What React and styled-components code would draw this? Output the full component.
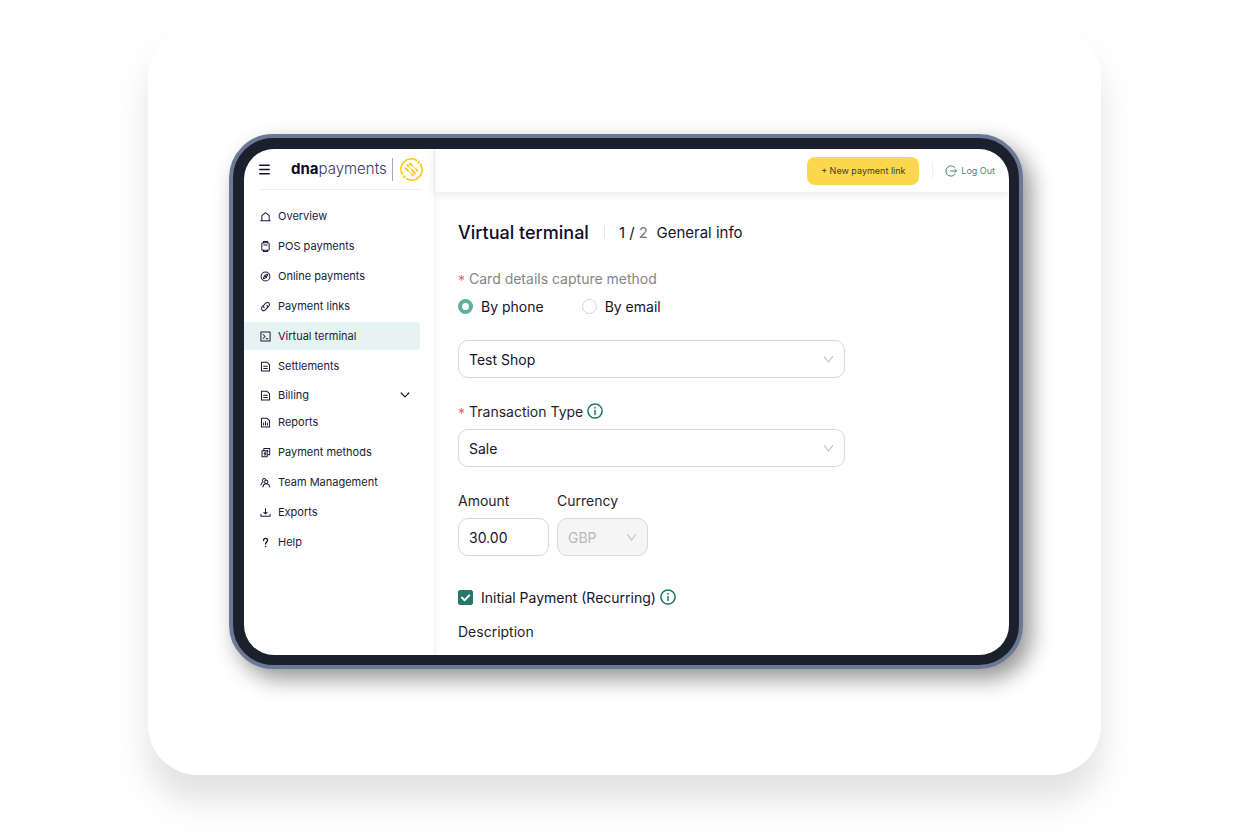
import React, { useState } from "react";
import styled, { createGlobalStyle } from "styled-components";

const GlobalStyle = createGlobalStyle`
  *, *::before, *::after {
    box-sizing: border-box;
  }
  body {
    margin: 0;
    background: #fefefe;
    color: #14142b;
    font-family: Inter, "Open Sans", sans-serif;
  }
  button, input, select {
    font-family: inherit;
    color: inherit;
  }
`;

// Styled components
const Page = styled.div`
  padding: 28px 149px 59px 148px;
`;

const Card = styled.div`
  padding: 106px 78px 106px 81px;
  border-radius: 50px;
  background: #fff;
  box-shadow: 0 26px 30px rgba(0, 0, 0, 0.11);
`;

const Device = styled.div`
  padding: 11px 10px 10px 11px;
  border: 4px solid #6c7896;
  border-radius: 44px;
  background: #1a202c;
  box-shadow: 8px 10px 22px rgba(0, 0, 0, 0.42);
`;

const Screen = styled.div`
  display: flex;
  border-radius: 30px;
  overflow: hidden;
  background: #fff;
`;

const Sidebar = styled.aside`
  flex: 0 0 191px;
  min-width: 0;
  border-right: 1px solid #f3f3f3;
  box-shadow: 1px 0 6px rgba(0, 0, 0, 0.04);
`;

const Brand = styled.div`
  display: flex;
  align-items: center;
  height: 41px;
  margin: 0 12px 0 15px;
  border-bottom: 1px solid #efefef;
`;

const MenuButton = styled.button`
  display: flex;
  padding: 0;
  margin-right: 21px;
  border: none;
  background: none;
  cursor: pointer;
`;

const Logo = styled.a`
  display: flex;
  align-items: center;
  gap: 5px;
  font-size: 15px;
  line-height: 24px;
  font-weight: 300;
  color: #3c3560;
  text-decoration: none;
  b {
    font-weight: 700;
    color: #0b0b26;
  }
`;

const LogoMark = styled.span`
  display: flex;
  padding-left: 7px;
  border-left: 1px solid #a9a9b5;
`;

const NavList = styled.ul`
  display: flex;
  flex-direction: column;
  gap: 2px;
  margin: 0;
  padding: 0 14px 0 0;
  list-style: none;
`;

const Nav = styled.nav`
  padding-top: 12px;
`;

const NavLink = styled.a`
  display: flex;
  align-items: center;
  gap: 7px;
  height: ${({ $group }) => ($group ? "26px" : "28px")};
  padding: 0 10px 0 16px;
  border-radius: 0 4px 4px 0;
  background: ${({ $active }) => ($active ? "#e7f3f2" : "transparent")};
  color: #1c1a3a;
  font-size: 11px;
  text-decoration: none;
`;

const NavText = styled.span`
  flex: 1;
`;

const Main = styled.main`
  flex: 1;
  min-width: 0;
`;

const TopBar = styled.header`
  display: flex;
  align-items: center;
  justify-content: flex-end;
  height: 43px;
  padding-right: 14px;
  box-shadow: 0 2px 10px rgba(0, 0, 0, 0.1);
`;

const PayButton = styled.button`
  height: 28px;
  padding: 0;
  width: 112px;
  border: none;
  border-radius: 8px;
  background: #fbd84b;
  color: #3b3a3c;
  font-size: 9px;
  cursor: pointer;
`;

const LogOut = styled.a`
  display: flex;
  align-items: center;
  gap: 4px;
  height: 18px;
  margin-left: 13px;
  padding-left: 12px;
  border-left: 1px solid #f0f0f0;
  color: #3c8a78;
  font-size: 9px;
  text-decoration: none;
`;

const Form = styled.form`
  padding: 28px 24px 12px 23px;
`;

const TitleRow = styled.div`
  display: flex;
  align-items: center;
  height: 24px;
  margin-bottom: 24px;
`;

const Title = styled.h1`
  margin: 0 15px 0 0;
  font-size: 18px;
  font-weight: 500;
  color: #0f0e2a;
`;

const Step = styled.div`
  display: flex;
  align-items: center;
  height: 12px;
  padding-left: 14px;
  border-left: 1px solid #e6e6e6;
  font-size: 15px;
  white-space: pre;
  span {
    color: #777;
  }
`;

const Field = styled.div`
  width: ${({ $width }) => $width || "387px"};
  max-width: 100%;
  margin-bottom: 23px;
`;

const FieldSet = styled.fieldset`
  margin: 0 0 24px;
  padding: 0;
  border: none;
`;

const FieldRow = styled.div`
  display: flex;
  gap: 8px;
  margin-bottom: 8px;
`;

const Label = styled.label`
  display: flex;
  align-items: center;
  gap: 4px;
  height: 20px;
  margin-bottom: 8px;
  padding: 0;
  font-size: 14px;
  color: ${({ $muted }) => ($muted ? "#858585" : "#1f1f25")};
`;

const Star = styled.span`
  width: 7px;
  padding-top: 4px;
  font-size: 14px;
  color: #f0605f;
`;

const RadioRow = styled.div`
  display: flex;
  gap: 38px;
`;

const Choice = styled.label`
  display: flex;
  align-items: center;
  gap: 8px;
  height: 20px;
  font-size: 14px;
`;

const Radio = styled.input`
  appearance: none;
  width: 15px;
  height: 15px;
  margin: 0;
  border: 1px solid #d4d4d4;
  border-radius: 50%;
  background: #fff;
  &:checked {
    border: 4px solid #5cb0a2;
  }
`;

const SelectBox = styled.div`
  position: relative;
  svg {
    position: absolute;
    right: 11px;
    top: 14px;
    pointer-events: none;
  }
`;

const Select = styled.select`
  appearance: none;
  display: block;
  width: 100%;
  height: 38px;
  padding: 0 10px;
  border: 1px solid #d9d9d9;
  border-radius: 10px;
  background: #fff;
  font-size: 14px;
  &:disabled {
    background: #f5f5f5;
    color: #b8b8b8;
    opacity: 1;
  }
`;

const Input = styled.input`
  display: block;
  width: 100%;
  height: 38px;
  padding: 0 10px;
  border: 1px solid #d9d9d9;
  border-radius: 10px;
  font-size: 14px;
`;

const CheckRow = styled.div`
  display: flex;
  align-items: center;
  gap: 4px;
  height: 20px;
  margin-bottom: 16px;
`;

const CheckBox = styled.span`
  position: relative;
  display: flex;
  svg {
    position: absolute;
    inset: 0;
    pointer-events: none;
  }
`;

const Check = styled.input`
  appearance: none;
  width: 15px;
  height: 15px;
  margin: 0;
  border: 1px solid #26786a;
  border-radius: 2px;
  &:checked {
    background: #26786a;
  }
`;

const SectionText = styled.div`
  height: 20px;
  font-size: 14px;
  color: #1f1f25;
`;

// Icons
const Icon = ({ size = 11, children, stroke = "currentColor", width = 1.1, box = 12 }) => (
  <svg
    width={size}
    height={size}
    viewBox={`0 0 ${box} ${box}`}
    fill="none"
    stroke={stroke}
    strokeWidth={width}
    strokeLinecap="round"
    strokeLinejoin="round"
    aria-hidden="true"
  >
    {children}
  </svg>
);

const page = <path d="M1.6 1.4h6L10.4 4v6.8H1.6z" />;

const icons = {
  overview: <path d="M.8 10.6h10.4M2 10.4V5L6 1.8 10 5v5.4" />,
  pos: (
    <>
      <rect x="2" y="2" width="8" height="8.2" rx="1.2" />
      <path d="M3.8 2V.6h4.4V2M4.2 4.4h3.6M3.8 10.2v1.2h4.4v-1.2" />
    </>
  ),
  online: (
    <>
      <circle cx="6" cy="6" r="4.8" />
      <path d="M8.6 3.4 7 7 3.4 8.6 5 5zM5 5l2 2" />
    </>
  ),
  links: (
    <>
      <path d="M4.4 7.2a2.3 2.3 0 0 1 .2-3.2l1.6-1.7a2.3 2.3 0 0 1 3.5 3.2L8.8 6.6" />
      <path d="M7.6 4.8a2.3 2.3 0 0 1-.2 3.2L5.8 9.7a2.3 2.3 0 0 1-3.5-3.2l.9-1.1" />
    </>
  ),
  terminal: (
    <>
      <rect x="1" y="1.2" width="10" height="9.6" />
      <path d="M3.4 3.8 5.6 6 3.4 8.2M6.6 8.4h2" />
    </>
  ),
  doc: (
    <>
      {page}
      <path d="M4 5.8h4M4 8.2h4" />
    </>
  ),
  report: (
    <>
      {page}
      <path d="M3.9 8.8V6.6M6 8.8V5M8.1 8.8V6.6" />
    </>
  ),
  methods: (
    <>
      <path d="M2.2 4h5.6v6.6H2.2z" />
      <path d="M4.2 4V1.6h6.4v6.8H7.8M6.2 5.2 4.4 7.4h1.8L5.2 9M8 3.6l.8 1.2" />
    </>
  ),
  team: (
    <>
      <circle cx="6.8" cy="5.4" r="1.8" />
      <path d="M3.2 10.8C3.4 8.6 4.8 7.4 6.6 7.4s3.6 1.2 4 3.4M1 8.6C1.2 7 2 6 3.4 5.6M3.2 5C2 3.6 3 1.4 5.2 1.8 6 2 6.4 2.6 6.6 3.4" />
    </>
  ),
  exports: <path d="M6 1.6v5.6M4.2 5.8 6 7.6l1.8-1.8M1 8v2.2h10V8" />,
  help: <path d="M3.9 3.8c0-3 4.4-2.9 4.4-.2C8.3 5.3 6.1 5.4 6.1 7.6M6.1 10.4v.1" strokeWidth="1.5" />,
};

const Chevron = () => (
  <Icon size={11} stroke="#b8b8b8" width={1.1}>
    <path d="M1.4 2.8 6 8.8l4.6-6" />
  </Icon>
);

const Info = () => (
  <Icon size={16} box={16} stroke="#1b7766" width={1.5}>
    <circle cx="8" cy="8" r="7.1" />
    <path d="M8 7.4v4" />
    <path d="M8 4.7v.1" strokeWidth="1.7" />
  </Icon>
);

const BrandMark = () => (
  <svg width="23" height="23" viewBox="0 0 24 24" fill="none" stroke="#fbc91b" strokeLinecap="round" aria-hidden="true">
    <path d="M17 2.4A10.7 10.7 0 0 0 2.4 17M7 21.6A10.7 10.7 0 0 0 21.6 7" strokeWidth="1.8" />
    <path d="M10.4 5.8l7.6 7.2M7.6 7.4l8 8.4M5.8 10.8l7.6 7.2" strokeWidth="1" />
    <path d="M10.6 6l1.6 1.5M7.8 7.6l.8.8M12.6 12.6l3 3.2M6 11l2 1.9M17.2 12.2l.8.8M12.6 17.2l.8.8" strokeWidth="2.3" />
    <circle cx="19.6" cy="4.4" r="1.3" fill="#fbc91b" stroke="none" />
    <circle cx="4.4" cy="19.6" r="1.3" fill="#fbc91b" stroke="none" />
  </svg>
);

const mainLinks = [
  { icon: "overview", text: "Overview" },
  { icon: "pos", text: "POS payments" },
  { icon: "online", text: "Online payments" },
  { icon: "links", text: "Payment links" },
  { icon: "terminal", text: "Virtual terminal", active: true },
  { icon: "doc", text: "Settlements" },
  { icon: "doc", text: "Billing", group: true },
];

const moreLinks = [
  { icon: "report", text: "Reports" },
  { icon: "methods", text: "Payment methods" },
  { icon: "team", text: "Team Management" },
  { icon: "exports", text: "Exports" },
  { icon: "help", text: "Help" },
];

const NavItems = ({ items }) => (
  <NavList>
    {items.map((item) => (
      <li key={item.text}>
        <NavLink href="#" $active={item.active} $group={item.group}>
          <Icon>{icons[item.icon]}</Icon>
          <NavText>{item.text}</NavText>
          {item.group && (
            <Icon size={10} width={1.5}>
              <path d="M1.4 3.6 6 8.2l4.6-4.6" />
            </Icon>
          )}
        </NavLink>
      </li>
    ))}
  </NavList>
);

const App = () => {
  const [method, setMethod] = useState("phone");
  const [amount, setAmount] = useState("30.00");
  const [recurring, setRecurring] = useState(true);

  return (
    <Page>
      <GlobalStyle />
      <Card>
        <Device>
          <Screen>
            <Sidebar>
              <Brand>
                <MenuButton aria-label="Menu">
                  <Icon size={11} width={1.5}>
                    <path d="M.8 1.4h10.4M.8 6h10.4M.8 10.6h10.4" />
                  </Icon>
                </MenuButton>
                <Logo href="#">
                  <span><b>dna</b>payments</span>
                  <LogoMark>
                    <BrandMark />
                  </LogoMark>
                </Logo>
              </Brand>
              <Nav>
                <NavItems items={mainLinks} />
                <NavItems items={moreLinks} />
              </Nav>
            </Sidebar>

            <Main>
              <TopBar>
                <PayButton>+ New payment link</PayButton>
                <LogOut href="#">
                  <Icon size={12} width={1}>
                    <path d="M10 2.6a5.2 5.2 0 1 0 0 6.8M5.4 6h6M9.8 4.6 11.4 6 9.8 7.4" />
                  </Icon>
                  Log Out
                </LogOut>
              </TopBar>

              <Form onSubmit={(e) => e.preventDefault()}>
                <TitleRow>
                  <Title>Virtual terminal</Title>
                  <Step>1 / <span>2</span>  General info</Step>
                </TitleRow>

                <FieldSet>
                  <Label as="legend" $muted>
                    <Star>*</Star>Card details capture method
                  </Label>
                  <RadioRow>
                    <Choice>
                      <Radio type="radio" name="method" checked={method === "phone"} onChange={() => setMethod("phone")} />
                      By phone
                    </Choice>
                    <Choice>
                      <Radio type="radio" name="method" checked={method === "email"} onChange={() => setMethod("email")} />
                      By email
                    </Choice>
                  </RadioRow>
                </FieldSet>

                <Field>
                  <SelectBox>
                    <Select aria-label="Shop">
                      <option>Test Shop</option>
                    </Select>
                    <Chevron />
                  </SelectBox>
                </Field>

                <Field>
                  <Label htmlFor="type">
                    <Star>*</Star>Transaction Type
                    <Info />
                  </Label>
                  <SelectBox>
                    <Select id="type">
                      <option>Sale</option>
                    </Select>
                    <Chevron />
                  </SelectBox>
                </Field>

                <FieldRow>
                  <Field $width="91px">
                    <Label htmlFor="amount">Amount</Label>
                    <Input id="amount" value={amount} onChange={(e) => setAmount(e.target.value)} />
                  </Field>
                  <Field $width="91px">
                    <Label htmlFor="currency">Currency</Label>
                    <SelectBox>
                      <Select id="currency" disabled>
                        <option>GBP</option>
                      </Select>
                      <Chevron />
                    </SelectBox>
                  </Field>
                </FieldRow>

                <CheckRow>
                  <Choice>
                    <CheckBox>
                      <Check type="checkbox" checked={recurring} onChange={(e) => setRecurring(e.target.checked)} />
                      <Icon size={15} box={15} stroke="#fff" width={2}>
                        <path d="M4 7.6l2.6 2.6L11.2 5.4" />
                      </Icon>
                    </CheckBox>
                    Initial Payment (Recurring)
                  </Choice>
                  <Info />
                </CheckRow>

                <SectionText>Description</SectionText>
              </Form>
            </Main>
          </Screen>
        </Device>
      </Card>
    </Page>
  );
};

export default App;
